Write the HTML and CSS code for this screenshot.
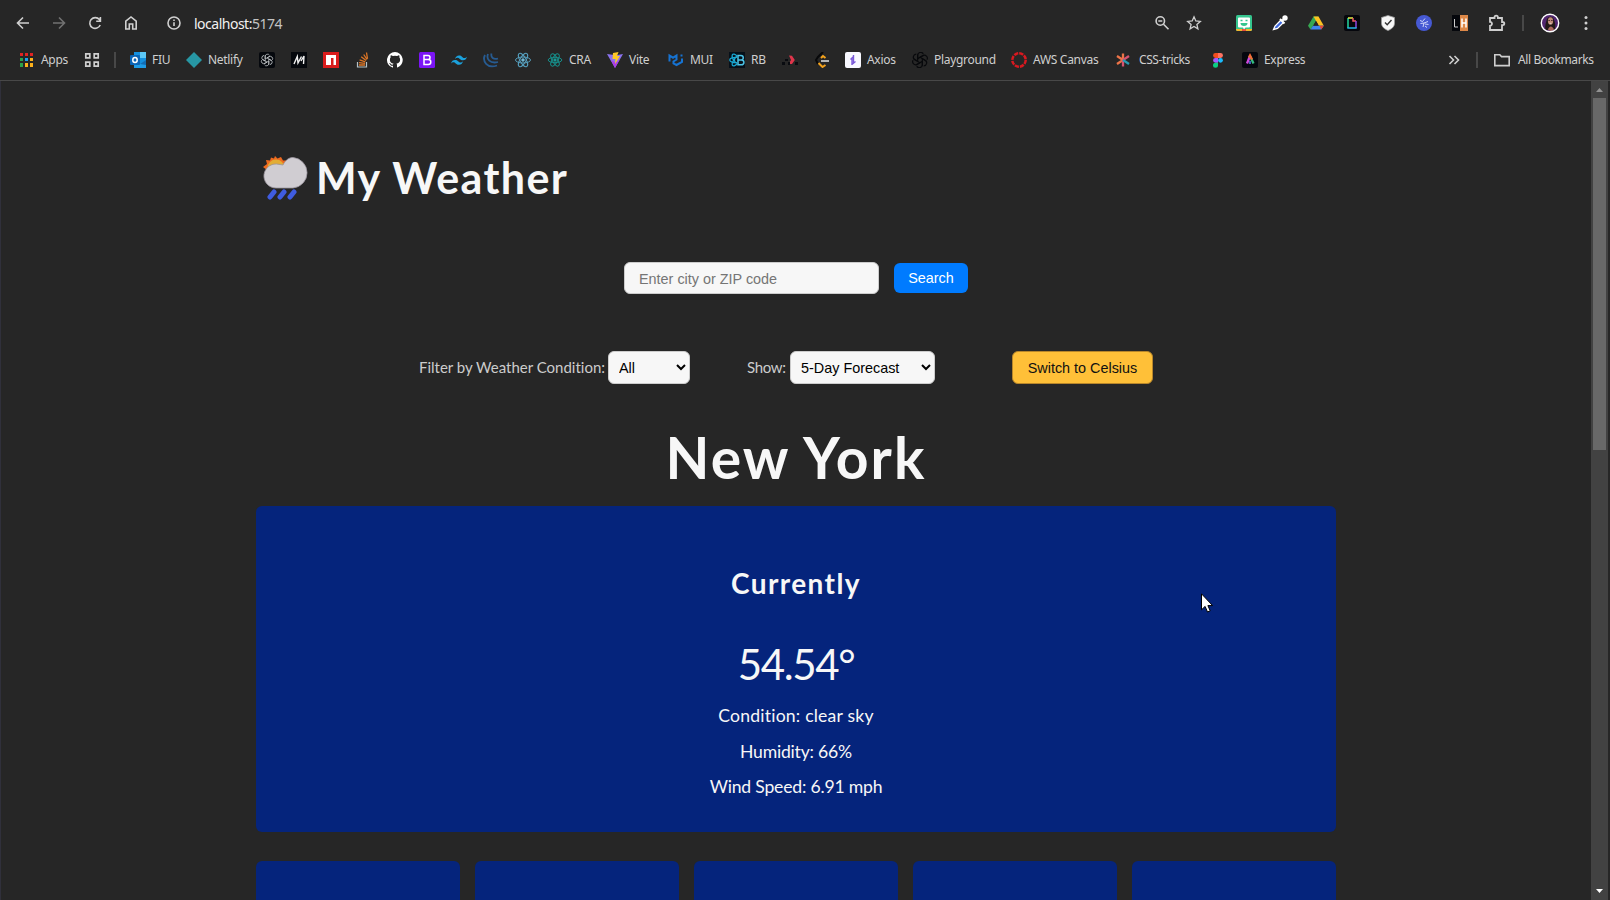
FILE: index.html
```html
<!DOCTYPE html>
<html lang="en">
<head>
<meta charset="utf-8">
<title>My Weather</title>
<link rel="stylesheet" href="styles.css">
</head>
<body>
<header class="chrome">
  <div class="toolbar">
    <div class="nav">
      <svg width="16" height="16" viewBox="0 0 16 16" class="line"><path d="M14 8H3M8 2.5 2.5 8 8 13.5"/></svg>
      <svg width="16" height="16" viewBox="0 0 16 16" class="line dim"><path d="M2 8h11M8 2.5 13.500 8 8 13.500"/></svg>
      <svg width="16" height="16" viewBox="0 0 16 16" class="line"><path d="M13.200 10A5.400 5.400 0 1 1 12.400 4.600L13.500 6M13.400 2V6.200H9.200"/></svg>
      <svg width="16" height="16" viewBox="0 0 16 16" class="line"><path d="M2.800 6.200 8 2l5.200 4.200V14H9.700V9H6.300v5H2.800z"/></svg>
    </div>
    <div class="address">
      <svg width="16" height="16" viewBox="0 0 16 16" class="line"><circle cx="8" cy="8" r="6"/><path d="M8 7.200V11M8 4.600v1.400"/></svg>
      <span class="url"><b>localhost:</b>5174</span>
    </div>
    <div class="page-actions">
      <svg width="16" height="16" viewBox="0 0 16 16" class="line"><circle cx="6.300" cy="6" r="4.200"/><path d="M9.500 9.200 14.500 14.300M4.300 6h4"/></svg>
      <svg width="16" height="16" viewBox="0 0 16 16" class="line star"><path d="M8 1.800 9.800 6l4.500.4-3.400 3 1 4.400L8 11.500l-3.900 2.300 1-4.400-3.400-3L6.200 6z"/></svg>
    </div>
    <div class="extensions">
      <svg width="16" height="16" viewBox="0 0 16 16"><rect width="16" height="16" rx="1.500" fill="#35c58e"/><path d="M0 14h16v1l-1 1H1l-1-1z" fill="#f2b52d"/><path d="M6 14h4v2H6z" fill="#e64d3c"/><path d="M3 2.500h10a1 1 0 0 1 1 1v8a1 1 0 0 1-1 1H9.500L8 14.500 7 12.500H3a1 1 0 0 1-1-1v-8a1 1 0 0 1 1-1z" fill="#fff"/><path d="M4.500 5.500h2M9.500 5.500h2" stroke="#35c58e" stroke-width="1.600"/><path d="M4.500 8h7a3.500 3 0 0 1-7 0z" fill="#35c58e"/></svg>
      <svg width="16" height="16" viewBox="0 0 16 16"><path d="M1.500 14.500 3 11l6-6 2.500 2.500-6 6z" fill="#3d68dc" stroke="#fff" stroke-width="1.300"/><path d="m8 4 4.500 4.500M10 6l3-3" stroke="#fff" stroke-width="2"/><circle cx="13" cy="3" r="2.700" fill="#fff"/></svg>
      <svg width="16" height="16" viewBox="0 0 16 16"><path d="M5.500 1.500h5L5 11l-2.500 3.500L0 10.700z" fill="#36a852"/><path d="M5.500 1.500h5l5.300 9.200h-5z" fill="#fdc220"/><path d="M5 10.700h10.800l-2.600 3.800H2.500z" fill="#3f86ee"/><path d="M15.800 10.700h-4.300l1.700 3.800z" fill="#e84635"/><path d="M8 6 5.300 10.500h5.400z" fill="#262626"/></svg>
      <svg width="16" height="16" viewBox="0 0 16 16"><rect width="16" height="16" rx="2" fill="#05060c"/><path d="M4 13V3" stroke="#23d99e" stroke-width="1.500"/><path d="M4 3h5" stroke="#e9ec45" stroke-width="1.500"/><path d="M9 3v3h3" stroke="#ef5964" stroke-width="1.500" fill="none"/><path d="M12 6v7" stroke="#8c45dd" stroke-width="1.500"/><path d="M3.300 13h9.400" stroke="#25b6e7" stroke-width="1.500"/></svg>
      <svg width="16" height="16" viewBox="0 0 16 16"><path d="M8 .5 14.500 2.500V8c0 4-3 6-6.500 7.500C4.500 14 1.500 12 1.500 8V2.500z" fill="#f7f7f7" stroke="#9a9a9a" stroke-width=".8"/><path d="m5 7.500 2.200 2.200L11.500 5" class="ink"/></svg>
      <svg width="16" height="16" viewBox="0 0 16 16"><circle cx="8" cy="8" r="8" fill="#4659d3"/><g stroke="#dfe4ff" stroke-width=".9" fill="none"><path d="m4 5.500 2.500 1 2.500-3M8 8l4-1.500M4.500 8.500 8 8l-1 4M9 9l3.500.5M9 11l2 1.500"/></g></svg>
      <svg width="16" height="16" viewBox="0 0 16 16"><path d="M0 0h8v16H0z" fill="#05070c"/><path d="M8 0h8v16H8z" fill="#dd8848"/><path d="M2.500 4v8H6" stroke="#ccc" fill="none"/><path d="M10 3.500v9M14 3.500v9M10 8h4" stroke="#fff" stroke-width="1.500"/></svg>
      <svg width="18" height="18" viewBox="0 0 18 18" class="line thick"><path d="M2 4h4.500V3.300a1.700 1.700 0 0 1 3.400 0V4H14v4h.7a1.500 1.500 0 0 1 0 3.200H14V16H2v-4.200a2 2 0 0 0 0-4z"/></svg>
    </div>
    <i class="sep"></i>
    <svg class="avatar" width="20" height="20" viewBox="0 0 20 20"><circle cx="10" cy="10" r="9" fill="#50256e"/><path d="M5.500 17c-1-4 .5-8 1.500-11 2-3 6-3 7 1 2 4 1 8 1 10z" fill="#211918"/><ellipse cx="10.500" cy="8" rx="2.600" ry="3.800" fill="#c08c78"/><path d="M8.300 7.500h1.700M11 7.500h1.700" stroke="#4a2c30" stroke-width=".9"/><path d="M9.500 10.300h2" stroke="#eee" stroke-width=".7"/><path d="M8 17c1-4 4-5 6 0l-3 1z" fill="#a9685c"/><circle cx="10" cy="10" r="8.700" fill="none" stroke="#fff" stroke-width="1.400"/></svg>
    <svg class="kebab" width="4" height="16" viewBox="0 0 4 16" fill="#cfcfcf"><circle cx="2" cy="2.500" r="1.500"/><circle cx="2" cy="8" r="1.500"/><circle cx="2" cy="13.500" r="1.500"/></svg>
  </div>

  <nav class="bookmarks">
    <a class="bm"><svg width="14" height="14" viewBox="0 0 14 14"><path d="M0 0h3v3H0zM5 0h3v3H5zM10 0h3v3h-3z" fill="#e02323"/><path d="M0 5h3v3H0zM0 10h3v4H0z" fill="#2ba24c"/><path d="M5 5h3v3H5z" fill="#1ca0f2"/><path d="M10 5h3v3h-3zM5 10h3v4H5zM10 10h3v4h-3z" fill="#fdb11b"/></svg><span class="apps">Apps</span></a>
    <a class="bm"><svg width="16" height="16" viewBox="0 0 16 16" fill="none" stroke="#cfcfcf" stroke-width="1.700"><path d="M1.800 1.800h4v4h-4zM10.200 1.800h4v4h-4zM1.800 10.200h4v4h-4zM10.200 10.200h4v4h-4z"/></svg></a>
    <i class="sep"></i>
    <a class="bm"><svg width="16" height="16" viewBox="0 0 16 16"><path d="M4 0h12v16H4z" fill="#1490df"/><path d="M10 0h6v6h-6z" fill="#5cc8f6"/><path d="m4 9 6 3 6-4v8H4z" fill="#1e9be6"/><path d="m10 12 6-4v5z" fill="#126cb3"/><rect y="3" width="10" height="10" rx="1" fill="#0b64b5"/><ellipse cx="5" cy="8" rx="2.200" ry="2.500" fill="none" stroke="#fff" stroke-width="1.500"/></svg><span class="fiu">FIU</span></a>
    <a class="bm"><svg width="16" height="16" viewBox="0 0 16 16"><path d="m8 0 8 8-8 8-8-8z" fill="#2797a4"/></svg><span class="netlify">Netlify</span></a>
    <a class="bm"><svg width="16" height="16" viewBox="0 0 16 16"><rect width="16" height="16" rx="2" fill="#05080d"/><g fill="none" stroke="#c5c9cc" stroke-width=".75"><path id="petal" d="M6.200 9V4.500a2.300 2.300 0 0 1 4.300-1.200M8 5.900 11 4.200"/><use href="#petal" transform="rotate(60 8 8)"/><use href="#petal" transform="rotate(120 8 8)"/><use href="#petal" transform="rotate(180 8 8)"/><use href="#petal" transform="rotate(240 8 8)"/><use href="#petal" transform="rotate(300 8 8)"/></g></svg></a>
    <a class="bm"><svg width="16" height="16" viewBox="0 0 16 16"><rect width="16" height="16" fill="#05080d"/><path d="M3 12 6.300 4.500 7 11l3.500-6.500M10 9l3-5-.5 8" fill="none" stroke="#f1f1f1" stroke-width="1.400"/></svg></a>
    <a class="bm"><svg width="16" height="16" viewBox="0 0 16 16"><rect width="16" height="16" fill="#d91c1c"/><path d="M3 3h10v10h-2.500V6H8v7H3z" fill="#fff"/></svg></a>
    <a class="bm"><svg width="16" height="16" viewBox="0 0 16 16" fill="none"><path d="M2.500 10v5h9v-5" stroke="#b8c3c6" stroke-width="1.200"/><path d="M4 13h6M4 10.600l6 .8M4.600 7.800l5.700 2M6.200 4.800l4.900 3.800M8.700 2.500l3.300 5M11.500.5l1 6.300" stroke="#dd7626" stroke-width="1.300"/></svg></a>
    <a class="bm"><svg width="16" height="16" viewBox="0 0 16 16"><path fill="#fff" d="M8 0a8 8 0 0 0-2.500 15.600c.4.100.5-.2.500-.4v-1.500c-2.200.5-2.700-1-2.700-1-.4-.9-.9-1.200-.9-1.200-.7-.5.100-.5.100-.5.800.1 1.200.8 1.200.8.700 1.200 1.900.9 2.300.7.100-.5.300-.9.500-1.100-1.800-.2-3.600-.9-3.600-4 0-.9.300-1.600.8-2.100-.1-.2-.4-1 .1-2.100 0 0 .7-.2 2.200.8a7.700 7.700 0 0 1 4 0c1.500-1 2.200-.8 2.200-.8.400 1.100.2 1.900.1 2.100.5.600.8 1.300.8 2.100 0 3.100-1.900 3.800-3.700 4 .3.300.6.800.6 1.500v2.200c0 .2.100.5.500.4A8 8 0 0 0 8 0z"/></svg></a>
    <a class="bm"><svg width="16" height="16" viewBox="0 0 16 16"><rect width="16" height="16" rx="1.500" fill="#7b14f5"/><path d="M5 3.500h4a2 2 0 0 1 0 4H5h4.300a2.400 2.400 0 0 1 0 5H5z" fill="none" stroke="#fff" stroke-width="1.500"/></svg></a>
    <a class="bm"><svg width="16" height="16" viewBox="0 0 16 16"><path fill="#1ba1dc" d="M4 7c.6-2.400 2-3.600 4-3.600 3 0 3.400 2.300 5 2.600 1 .3 2 0 3-1.200-.6 2.400-2 3.500-4 3.500-3 0-3.500-2.200-5-2.500C6 5.600 5 5.900 4 7zM0 11.500C.7 9.100 2 8 4 8c3 0 3.500 2.200 5 2.500 1 .3 2-.1 3-1.300-.6 2.400-2 3.600-4 3.600-3 0-3.400-2.300-5-2.600-1-.2-2 .1-3 1.300z"/></svg></a>
    <a class="bm"><svg width="16" height="16" viewBox="0 0 16 16" fill="none" stroke="#275b91" stroke-width="1.800"><path d="M2 3c-3 6 2 14 12 10.500M5 2c-2 5 2 10 10 8M8.500 1.500c-1 4 2 6.500 6.500 5"/></svg></a>
    <a class="bm"><svg width="16" height="16" viewBox="0 0 16 16" fill="none" stroke="#559dbb" stroke-width="1"><ellipse cx="8" cy="8" rx="7.500" ry="3"/><ellipse cx="8" cy="8" rx="7.500" ry="3" transform="rotate(60 8 8)"/><ellipse cx="8" cy="8" rx="7.500" ry="3" transform="rotate(120 8 8)"/><circle cx="8" cy="8" r="1.300" fill="#9ed9ee"/></svg></a>
    <a class="bm"><svg width="16" height="16" viewBox="0 0 16 16" fill="none" stroke="#168f8b" stroke-width="1"><ellipse cx="8" cy="8" rx="6.800" ry="2.700"/><ellipse cx="8" cy="8" rx="6.800" ry="2.700" transform="rotate(60 8 8)"/><ellipse cx="8" cy="8" rx="6.800" ry="2.700" transform="rotate(120 8 8)"/><circle cx="8" cy="8" r="1.200" fill="#21b7ab"/></svg><span class="cra">CRA</span></a>
    <a class="bm"><svg width="16" height="16" viewBox="0 0 16 16"><path d="M0 2 8 16l8-14-7 1.200z" fill="#8b73ef"/><path d="M8 16 4 8l5 3 4-4z" fill="#ae3ce5"/><path d="M6 1 11.500 0 10 4h3l-5 8 .5-5H5.500z" fill="#fec926"/></svg><span class="vite">Vite</span></a>
    <a class="bm"><svg width="16" height="16" viewBox="0 0 16 16" fill="none" stroke="#1673d2" stroke-width="2"><path d="M1.500 9.500V3.500L5 5.700l3.500-2.200V7.500L5.500 9.500v2l3 1.500 5.500-3V6.500M13.500 4.500V2.500"/></svg><span class="mui">MUI</span></a>
    <a class="bm"><svg width="16" height="16" viewBox="0 0 16 16"><rect width="16" height="16" fill="#071019"/><g fill="none" stroke="#18a8d3" stroke-width="1.200"><path d="M8 5.500C4 5 .7 6.300.7 8s3.300 3 7.300 2.500M8 4C6 2 4 1.500 3.300 2.800S4 8 8 12M8 4C4 8 2.500 12 3.300 13.200S6 14 8 12"/><circle cx="5" cy="8" r=".7"/></g><path d="M9 3.500h3a2.200 2.200 0 0 1 0 4.500H9h3.500a2.400 2.400 0 0 1 0 4.800H9z" fill="none" stroke="#4cc3e6" stroke-width="1.500"/></svg><span class="rb">RB</span></a>
    <a class="bm"><svg width="16" height="16" viewBox="0 0 16 16"><path d="m7 3.500 3 .3L12.800 8 10 12H6.500L9 8z" fill="#df354b"/><path d="M3 7h3v2H3zM0 10h3v3H0zM13 10h3v3h-3zM6 10h2v3H6z" fill="#090b10"/></svg></a>
    <a class="bm"><svg width="17" height="16" viewBox="0 0 17 16" fill="none" stroke-width="2"><path d="m9 0-5 5-2 3 2 4" stroke="#08090b"/><path d="M11.500 6 9 4 7 6M4.500 11l4 4 3-2" stroke="#f4a21b"/><path d="M7 9h8" stroke="#b5b5b5"/></svg></a>
    <a class="bm axios"><svg width="16" height="16" viewBox="0 0 16 16"><rect width="16" height="16" rx="2" fill="#f8f8ff"/><path d="M8.500 3v8M7 6.500V13M8 5 5.500 7.500M7.500 12l3-2.500" stroke="#7958d8" stroke-width="1.400"/></svg><span class="axios-label">Axios</span></a>
    <a class="bm"><svg width="16" height="16" viewBox="0 0 16 16" fill="none" stroke="#08090c" stroke-width=".9"><g transform="translate(8 8) scale(1.300) translate(-8 -8)"><use href="#petal"/><use href="#petal" transform="rotate(60 8 8)"/><use href="#petal" transform="rotate(120 8 8)"/><use href="#petal" transform="rotate(180 8 8)"/><use href="#petal" transform="rotate(240 8 8)"/><use href="#petal" transform="rotate(300 8 8)"/></g></svg><span class="playground">Playground</span></a>
    <a class="bm"><svg width="16" height="16" viewBox="0 0 16 16" fill="none"><circle cx="8" cy="8" r="6.700" stroke="#d71920" stroke-width="2.500" stroke-dasharray="4.260 1"/></svg><span class="aws">AWS Canvas</span></a>
    <a class="bm"><svg width="17" height="16" viewBox="0 0 17 16" fill="none" stroke-width="2.300"><path d="M8 8V1.500M8 8 2 4M8 8l-6 4" stroke="#ee7448"/><path d="M8 8v6.500M8 8l6-4" stroke="#d8536f"/><path d="m8 8 6 4" stroke="#2a9ab1"/></svg><span class="css">CSS-tricks</span></a>
    <a class="bm figma"><svg width="16" height="16" viewBox="0 0 16 16"><path d="M8 1H5.500a2.400 2.400 0 0 0 0 4.900H8z" fill="#f24e1e"/><path d="M8 1h2.500a2.400 2.400 0 0 1 0 4.900H8z" fill="#ff7262"/><path d="M8 5.900H5.500a2.400 2.400 0 0 0 0 4.900H8z" fill="#a259ff"/><circle cx="10.500" cy="8.300" r="2.400" fill="#1abcfe"/><path d="M8 10.800H5.500A2.500 2.500 0 1 0 8 13.300z" fill="#0acf83"/></svg></a>
    <a class="bm"><svg width="16" height="16" viewBox="0 0 16 16"><rect width="16" height="16" rx="2" fill="#05070e"/><path d="M5 11.500 8 4" stroke="#cf49dc" stroke-width="2.300"/><path d="m8 4 3.500 7.500" stroke="#36bb80" stroke-width="2.300"/><path d="m7 5.500 1-2 2 4" fill="none" stroke="#f46a36" stroke-width="2.300"/><path d="M8 9v3" stroke="#587df2" stroke-width="1.500"/></svg><span class="express">Express</span></a>
    <div class="bm-end">
      <svg width="12" height="12" viewBox="0 0 12 12" class="line"><path d="m1.500 2 4 4-4 4M6.500 2l4 4-4 4"/></svg>
      <i class="sep"></i>
      <svg width="16" height="16" viewBox="0 0 16 16" class="line"><path d="M.8 2.800h5l1.700 1.800h7.700v9H.8z"/></svg>
      <span class="all">All Bookmarks</span>
    </div>
  </nav>
</header>

<div class="viewport">
  <main class="app">
    <h1 class="brand">
      <svg width="46" height="44" viewBox="0 0 46 44"><path d="m12 0 2.500 2.500L18 1l2 3.500h4L23 8l3 3-4 11L8 23l-1-4-4-1 1-4-4-3 4-3-1-4 4 .5L8 1.500l3 1z" fill="#ee6a20"/><circle cx="13" cy="12" r="8.500" fill="#e2ad35"/><path d="M13 32a12 12 0 1 1 3-23.600l4 .6C22.500 4 26 1.500 30 1.500a15.300 15.300 0 0 1 0 30.500z" fill="#d0cdd2" stroke="#9a949e" stroke-width=".8"/><path d="m11 36-4 5M21 36l-4 5M31 36l-4 5" stroke="#3f5ce0" stroke-width="5" stroke-linecap="round"/></svg>
      <span class="brand-text">My Weather</span>
    </h1>
    <form class="search">
      <input type="text" placeholder="Enter city or ZIP code">
      <button type="button" class="search-btn">Search</button>
    </form>
    <div class="filters">
      <label class="filter-label">Filter by Weather Condition:</label>
      <select class="condition"><option>All</option></select>
      <label class="show-label">Show:</label>
      <select class="range"><option>5-Day Forecast</option></select>
      <button type="button" class="unit-btn">Switch to Celsius</button>
    </div>
    <h2 class="city">New York</h2>
    <section class="current">
      <h3>Currently</h3>
      <p class="temp">54.54°</p>
      <p class="cond">Condition: clear sky</p>
      <p class="hum">Humidity: 66%</p>
      <p class="wind">Wind Speed: 6.91 mph</p>
    </section>
    <section class="forecast"><article></article><article></article><article></article><article></article><article></article></section>
  </main>
  <div class="scrollbar">
    <svg width="17" height="17" viewBox="0 0 17 17"><path d="m5 11 3.500-4L12 11z" fill="#929292"/></svg>
    <i class="thumb"></i>
    <svg class="down" width="17" height="17" viewBox="0 0 17 17"><path d="m5 6 3.500 4L12 6z" fill="#fff"/></svg>
  </div>
</div>
<svg class="cursor" width="12" height="20" viewBox="0 0 12 20"><path d="M.5.8v16l3.600-3.400L6.500 19l2.700-1.200-2.300-5.200h4.700z" fill="#fff" stroke="#000"/></svg>
</body>
</html>
```
FILE: styles.css
```css
* { box-sizing: border-box; }

body {
  margin: 0;
  width: 1610px;
  height: 900px;
  overflow: hidden;
  background: #262626;
  color: #f7f7f7;
  font-family: Lato, "Open Sans", sans-serif;
  font-variant-ligatures: none;
}

svg { flex: none; display: block; }
h1, h2, h3, p { margin: 0; }

.line { fill: none; stroke: #cfcfcf; stroke-width: 1.6; }
.thick { stroke-width: 1.8; }
.star { stroke-width: 1.3; }
.dim { stroke: #717171; }
.ink { fill: none; stroke: #333; stroke-width: 1.4; }
.sep { width: 2px; height: 16px; background: #484848; flex: none; }

/* browser frame */
.chrome {
  height: 81px;
  border-bottom: 1px solid #484848;
  font-family: "Noto Sans", "Open Sans", sans-serif;
}
.toolbar { display: flex; align-items: center; height: 46px; padding-left: 15px; }
.nav { display: flex; gap: 20px; }
.address { display: flex; align-items: center; gap: 12px; margin-left: 27px; }
.url { width: 100px; font-size: 14px; letter-spacing: -0.5px; color: #c3c3c3; white-space: nowrap; }
.url b { font-weight: 400; color: #f1f1f1; }
.page-actions { display: flex; gap: 16px; margin-left: auto; }
.extensions { display: flex; align-items: center; gap: 20px; margin-left: 34px; }
.toolbar > .sep { margin-left: 16px; }
.avatar { margin-left: 16px; }
.kebab { margin: 0 22px 0 24px; }

.bookmarks { display: flex; align-items: center; gap: 16px; height: 28px; padding-left: 20px; font-size: 12px; color: #cfcfcf; }
.bm { display: flex; align-items: center; gap: 6px; white-space: nowrap; }
.bm span, .bm-end span { letter-spacing: -0.3px; line-height: 16px; white-space: nowrap; }
.bookmarks > .sep { margin: 0 -2px 0 -2px; }
.apps { width: 27px; margin-left: 1px; }
.fiu { width: 18px; }
.netlify { width: 35px; }
.cra { width: 22px; }
.vite { width: 23px; }
.mui { width: 23px; }
.rb { width: 15px; }
.axios { margin-left: -2px; }
.axios-label { width: 29px; }
.playground { width: 61px; }
.aws { width: 66px; }
.css { width: 55px; }
.figma { margin-left: 1px; }
.express { width: 40px; }
.bm .css { margin-left: 1px; width: 54px; letter-spacing: -0.4px; }
.bm-end { display: flex; align-items: center; margin: 0 16px 0 auto; }
.bm-end .sep { margin: 0 16px; }
.bm-end .all { width: 76px; margin-left: 8px; letter-spacing: -0.4px; }

/* page */
.viewport { display: flex; height: 819px; overflow: hidden; padding-right: 2px; border-left: 1px solid #30303b; }
.app { width: 1080px; margin-left: 255px; }
.brand { display: flex; height: 181px; padding: 75px 0 0 7px; font-size: 43px; font-weight: 700; letter-spacing: 1.4px; }
.brand-text { margin-left: 7px; line-height: 44px; white-space: nowrap; }

input, select, button { height: 33px; border: 1px solid #ccc; border-radius: 6px; font: 14.4px "Liberation Sans", Arial, sans-serif; }
.search { display: flex; align-items: center; height: 32px; padding-left: 368px; }
.search input { width: 255px; height: 32px; padding: 1px 14px 0; background: #f7f7f7; }
.search input::placeholder { color: #757575; }
.search-btn { width: 74px; height: 30px; margin-left: 15px; padding: 0; border: 0; background: #007bff; color: #fff; }

.filters { display: flex; align-items: center; margin-top: 57px; height: 33px; padding-left: 163px; font-size: 15px; color: #ccc; }
.filters label { padding-bottom: 2px; white-space: nowrap; }
.filter-label { width: 189px; }
select { padding: 1px 6px 0; background: #f7f7f7; color: #000; }
.condition { width: 82px; }
.show-label { width: 43px; margin-left: 57px; letter-spacing: -0.3px; }
.range { width: 145px; }
.unit-btn { width: 141px; margin-left: 77px; padding: 1px 0 0; background: #ffc038; border-color: #b8862a; color: #111; }

.city { height: 122px; padding-top: 38px; font-size: 57px; line-height: 70px; letter-spacing: 2.1px; text-align: center; }
.current { height: 326px; padding-top: 57px; border-radius: 6px; background: #05247c; text-align: center; }
.current h3 { font-size: 28px; line-height: 40px; letter-spacing: 1.4px; }
.temp { margin-top: 39px; font-size: 42px; line-height: 44px; font-weight: 400; letter-spacing: -1.4px; }
.cond, .hum, .wind { font-size: 17.6px; line-height: 35.5px; letter-spacing: -0.2px; }
.cond { margin-top: 12px; letter-spacing: 0.2px; }
.forecast { display: grid; grid-template-columns: repeat(5, 1fr); gap: 15px; margin-top: 29px; }
.forecast article { height: 39px; border-radius: 6px 6px 0 0; background: #05247c; }

.scrollbar { display: flex; flex-direction: column; width: 17px; height: 819px; margin-left: auto; background: #424242; }
.thumb { width: 13px; height: 352px; margin: 0 2px; background: #686868; }
.down { margin-top: auto; }

.cursor { position: absolute; left: 1201px; top: 593px; }
```
